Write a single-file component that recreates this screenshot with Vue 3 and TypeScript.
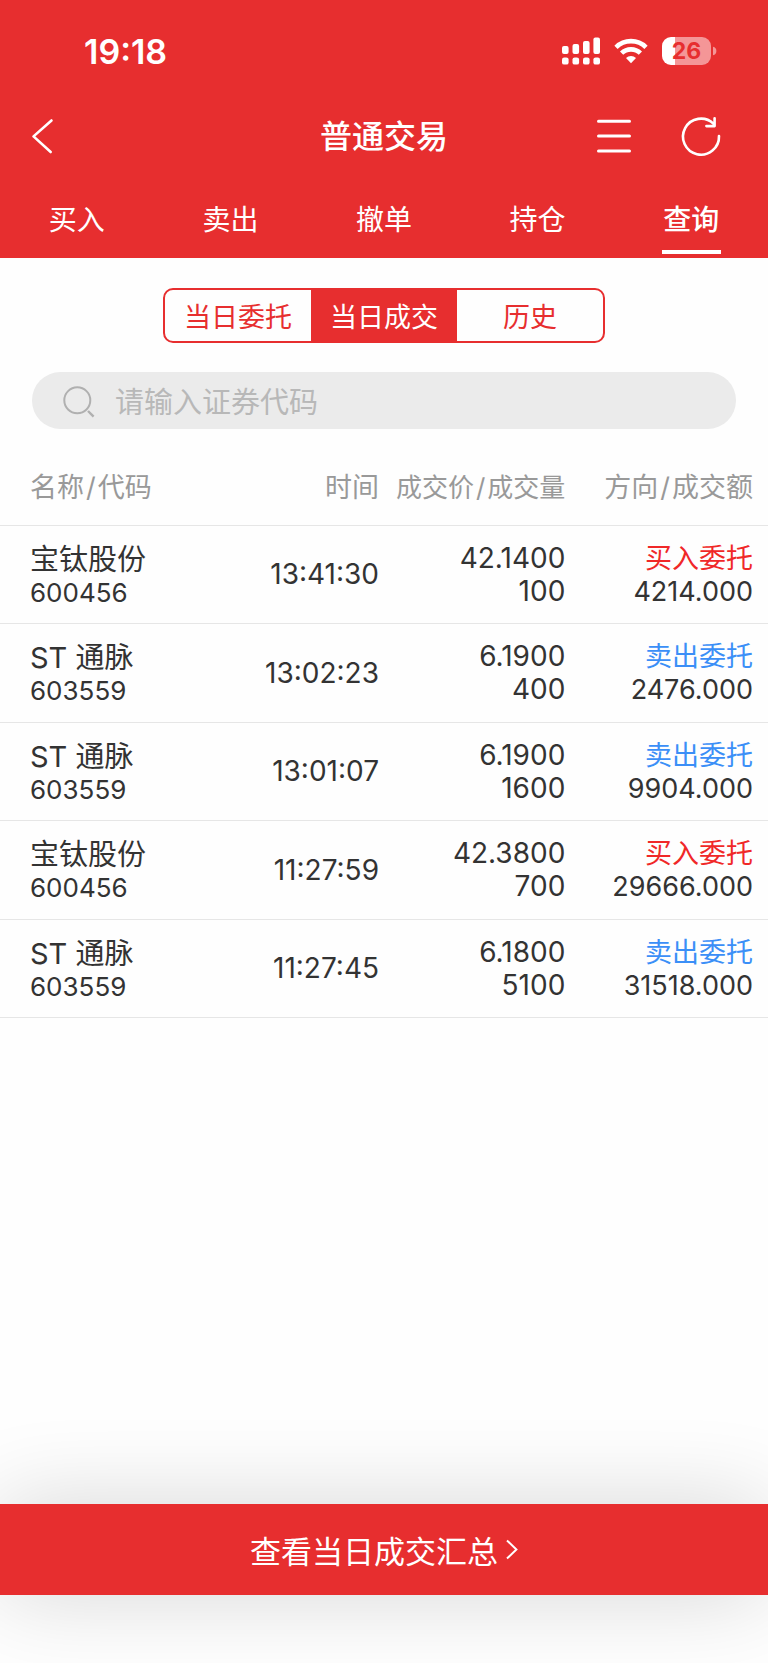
<script setup lang="ts">
import { ref } from 'vue'

interface Deal {
  name: string
  code: string
  time: string
  price: string
  volume: string
  side: 'buy' | 'sell'
  amount: string
}

const tabs: string[] = ['买入', '卖出', '撤单', '持仓', '查询']
const activeTab = ref('查询')

const segments: string[] = ['当日委托', '当日成交', '历史']
const activeSegment = ref('当日成交')

const keyword = ref('')

const sideLabels: Record<Deal['side'], string> = { buy: '买入委托', sell: '卖出委托' }

const deals: Deal[] = [
  { name: '宝钛股份', code: '600456', time: '13:41:30', price: '42.1400', volume: '100', side: 'buy', amount: '4214.000' },
  { name: 'ST 通脉', code: '603559', time: '13:02:23', price: '6.1900', volume: '400', side: 'sell', amount: '2476.000' },
  { name: 'ST 通脉', code: '603559', time: '13:01:07', price: '6.1900', volume: '1600', side: 'sell', amount: '9904.000' },
  { name: '宝钛股份', code: '600456', time: '11:27:59', price: '42.3800', volume: '700', side: 'buy', amount: '29666.000' },
  { name: 'ST 通脉', code: '603559', time: '11:27:45', price: '6.1800', volume: '5100', side: 'sell', amount: '31518.000' },
]
</script>

<template>
  <div class="page">
    <header class="header">
      <div class="status">
        <span class="clock">19:18</span>
        <div class="indicators">
          <svg class="signal" width="40" height="28" viewBox="0 0 40 28" fill="#fff" aria-hidden="true">
            <rect x="1" y="9" width="6.6" height="8" rx="2" />
            <rect x="11.5" y="7" width="6.6" height="10" rx="2" />
            <rect x="22" y="4" width="6.6" height="13" rx="2" />
            <rect x="32.4" y="0.5" width="6.6" height="16.5" rx="2" />
            <rect x="1" y="20.4" width="6.6" height="7.2" rx="2.2" />
            <rect x="11.5" y="20.4" width="6.6" height="7.2" rx="2.2" />
            <rect x="22" y="20.4" width="6.6" height="7.2" rx="2.2" />
            <rect x="32.4" y="20.4" width="6.6" height="7.2" rx="2.2" />
          </svg>
          <svg class="wifi" width="34" height="28" viewBox="0 0 34 28" aria-hidden="true">
            <g fill="none" stroke="#fff" stroke-width="4.6">
              <path d="M2 10.3a21.4 21.4 0 0 1 30 0" />
              <path d="M7.6 16.2a13.4 13.4 0 0 1 18.8 0" />
            </g>
            <path d="M17 26.2l-5-5.1a7.2 7.2 0 0 1 10 0z" fill="#fff" />
          </svg>
          <div class="battery">
            <span class="battery-body">26</span>
            <svg width="4" height="10" viewBox="0 0 4 10" aria-hidden="true">
              <path d="M0 .8Q3.4 1.6 3.4 5T0 9.2z" fill="#f49697" />
            </svg>
          </div>
        </div>
      </div>

      <div class="nav">
        <button class="icon-button back" type="button" aria-label="返回">
          <svg width="44" height="44" viewBox="0 0 44 44" aria-hidden="true">
            <path d="M30.5 6.5L12.5 22.4L29.7 38" />
          </svg>
        </button>
        <h1 class="title">普通交易</h1>
        <div class="actions">
          <button class="icon-button" type="button" aria-label="菜单">
            <svg width="44" height="44" viewBox="0 0 44 44" aria-hidden="true">
              <path d="M6.5 7.3h31M6.5 22h31M6.5 37h31" stroke-width="3" />
            </svg>
          </button>
          <button class="icon-button" type="button" aria-label="刷新">
            <svg width="44" height="44" viewBox="0 0 44 44" aria-hidden="true">
              <path d="M40 22a18 18 0 1 1-5.6-12.4M35.6 4.2v7.9h-8.2" />
            </svg>
          </button>
        </div>
      </div>

      <nav class="tabs">
        <button
          v-for="tab in tabs"
          :key="tab"
          type="button"
          class="tab"
          :class="{ active: tab === activeTab }"
          @click="activeTab = tab"
        >
          {{ tab }}
        </button>
      </nav>
    </header>

    <main class="content">
      <div class="segments">
        <button
          v-for="segment in segments"
          :key="segment"
          type="button"
          class="segment"
          :class="{ active: segment === activeSegment }"
          @click="activeSegment = segment"
        >
          {{ segment }}
        </button>
      </div>

      <label class="search">
        <svg width="34" height="34" viewBox="0 0 34 34" fill="none" stroke="#b0b0b0" stroke-width="2" aria-hidden="true">
          <circle cx="15.3" cy="16.3" r="13" />
          <path d="M26 27l5.6 5.6" stroke-width="2.4" />
        </svg>
        <input v-model="keyword" type="text" placeholder="请输入证券代码" aria-label="请输入证券代码" />
      </label>

      <table class="deals">
        <thead>
          <tr>
            <th class="col-name" scope="col">名称<span class="slash">/</span>代码</th>
            <th class="col-time" scope="col">时间</th>
            <th class="col-price" scope="col">成交价<span class="slash">/</span>成交量</th>
            <th class="col-side" scope="col">方向<span class="slash">/</span>成交额</th>
          </tr>
        </thead>
        <tbody>
          <tr v-for="deal in deals" :key="deal.time">
            <td class="col-name">
              <div class="name">{{ deal.name }}</div>
              <div class="code">{{ deal.code }}</div>
            </td>
            <td class="col-time">{{ deal.time }}</td>
            <td class="col-price">
              <div>{{ deal.price }}</div>
              <div>{{ deal.volume }}</div>
            </td>
            <td class="col-side">
              <div :class="deal.side">{{ sideLabels[deal.side] }}</div>
              <div>{{ deal.amount }}</div>
            </td>
          </tr>
        </tbody>
      </table>
    </main>

    <footer class="footer">
      <button class="summary" type="button">
        查看当日成交汇总
        <svg width="12" height="22" viewBox="0 0 12 22" fill="none" stroke="#fff" stroke-width="2" aria-hidden="true">
          <path d="M1 1.5L10.4 10.5L1 19.5" />
        </svg>
      </button>
    </footer>
  </div>
</template>

<style>
body {
  margin: 0;
  background: #fefefe;
}
</style>

<style scoped>
.page {
  display: flex;
  flex-direction: column;
  min-height: 100vh;
  overflow: hidden;
  background: #fefefe;
  color: #333;
  font-family: Inter, "Noto Sans CJK SC", sans-serif;
  font-size: 27px;
}

button {
  margin: 0;
  padding: 0;
  border: 0;
  background: none;
  color: inherit;
  font: inherit;
  cursor: pointer;
}

svg {
  display: block;
  flex: none;
}

.header {
  background: #e72e2f;
  color: #fff;
}

.status {
  display: flex;
  align-items: center;
  justify-content: space-between;
  height: 94px;
  padding: 4px 51px 0 84px;
}

.clock {
  font-size: 34px;
  font-weight: 600;
}

.indicators {
  display: flex;
  align-items: center;
}

.wifi {
  margin: 0 14px 0 13px;
}

.battery {
  display: flex;
  align-items: center;
  gap: 2px;
}

.battery-body {
  width: 49px;
  height: 28px;
  border-radius: 9px;
  background: linear-gradient(to right, #fff 27%, #f49697 27%);
  color: #e72e2f;
  font-size: 23px;
  font-weight: 700;
  line-height: 28px;
  text-align: center;
}

.nav {
  display: grid;
  grid-template-columns: 1fr auto 1fr;
  align-items: center;
  height: 76px;
  padding: 0 21px;
}

.title {
  margin: 0;
  padding-top: 2px;
  font-size: 32px;
  font-weight: 500;
  line-height: 44px;
}

.icon-button svg {
  fill: none;
  stroke: #fff;
  stroke-width: 2.6;
  stroke-linecap: round;
  stroke-linejoin: round;
}

.back {
  justify-self: start;
}

.actions {
  display: flex;
  justify-self: end;
  gap: 43px;
  padding-right: 24px;
}

.tabs {
  display: grid;
  grid-template-columns: repeat(5, 1fr);
  height: 84px;
}

.tab {
  display: flex;
  flex-direction: column;
  align-items: center;
  gap: 6px;
  padding-top: 22px;
  font-size: 28px;
  line-height: 48px;
}

.tab.active {
  font-weight: 500;
}

.tab.active::after {
  width: 59px;
  height: 4px;
  background: #fff;
  content: "";
}

.content {
  display: flex;
  flex-direction: column;
  padding-top: 30px;
}

.segments {
  display: grid;
  grid-template-columns: repeat(3, 1fr);
  align-self: center;
  box-sizing: border-box;
  width: 100%;
  max-width: 442px;
  height: 55px;
  overflow: hidden;
  border: 2px solid #e72e2f;
  border-radius: 10px;
}

.segment {
  color: #e72e2f;
}

.segment.active {
  background: #e72e2f;
  color: #fff;
}

.search {
  display: flex;
  align-items: center;
  gap: 19px;
  height: 57px;
  margin: 29px 32px 0;
  padding: 0 30px;
  border-radius: 29px;
  background: #ebebeb;
}

.search input {
  flex: 1;
  min-width: 0;
  height: 44px;
  padding: 3px 0 0;
  border: 0;
  outline: 0;
  background: none;
  color: #333;
  font: inherit;
  font-size: 29px;
}

.search input::placeholder {
  color: #b8b8b8;
  opacity: 1;
}

.deals {
  width: 100%;
  margin-top: 18px;
  border-spacing: 0;
  table-layout: fixed;
}

.deals th,
.deals td {
  box-sizing: border-box;
  padding: 0;
  border-bottom: 1px solid #e6e6e6;
  line-height: 33px;
  text-align: right;
  white-space: nowrap;
}

.deals th {
  height: 79px;
  padding-top: 3px;
  color: #999;
  font-weight: 400;
}

.deals td {
  height: 98px;
}

.deals tr:nth-child(even) td {
  height: 99px;
}

.deals .col-name {
  width: 25%;
  padding-left: 30px;
  text-align: left;
}

.deals .col-time {
  width: 25%;
  padding-right: 5px;
}

.deals .col-price {
  width: 24%;
  padding-right: 3px;
}

.deals .col-side {
  width: 26%;
  padding-right: 15px;
}

.deals td.col-time,
.deals td.col-price {
  font-size: 28px;
}

.deals th.col-price {
  font-size: 26px;
}

.slash {
  margin: 0 2px;
}

.deals .name {
  padding-top: 2px;
  font-size: 29px;
}

.code {
  font-size: 26px;
}

.buy {
  color: #f02828;
}

.sell {
  color: #3b8ff7;
}

.footer {
  margin-top: auto;
  padding-bottom: 68px;
}

.summary {
  display: flex;
  align-items: center;
  justify-content: center;
  gap: 8px;
  width: 100%;
  height: 91px;
  background: #e72e2f;
  box-shadow: 0 0 90px rgba(0, 0, 0, 0.16);
  color: #fff;
  font-size: 31px;
}
</style>
